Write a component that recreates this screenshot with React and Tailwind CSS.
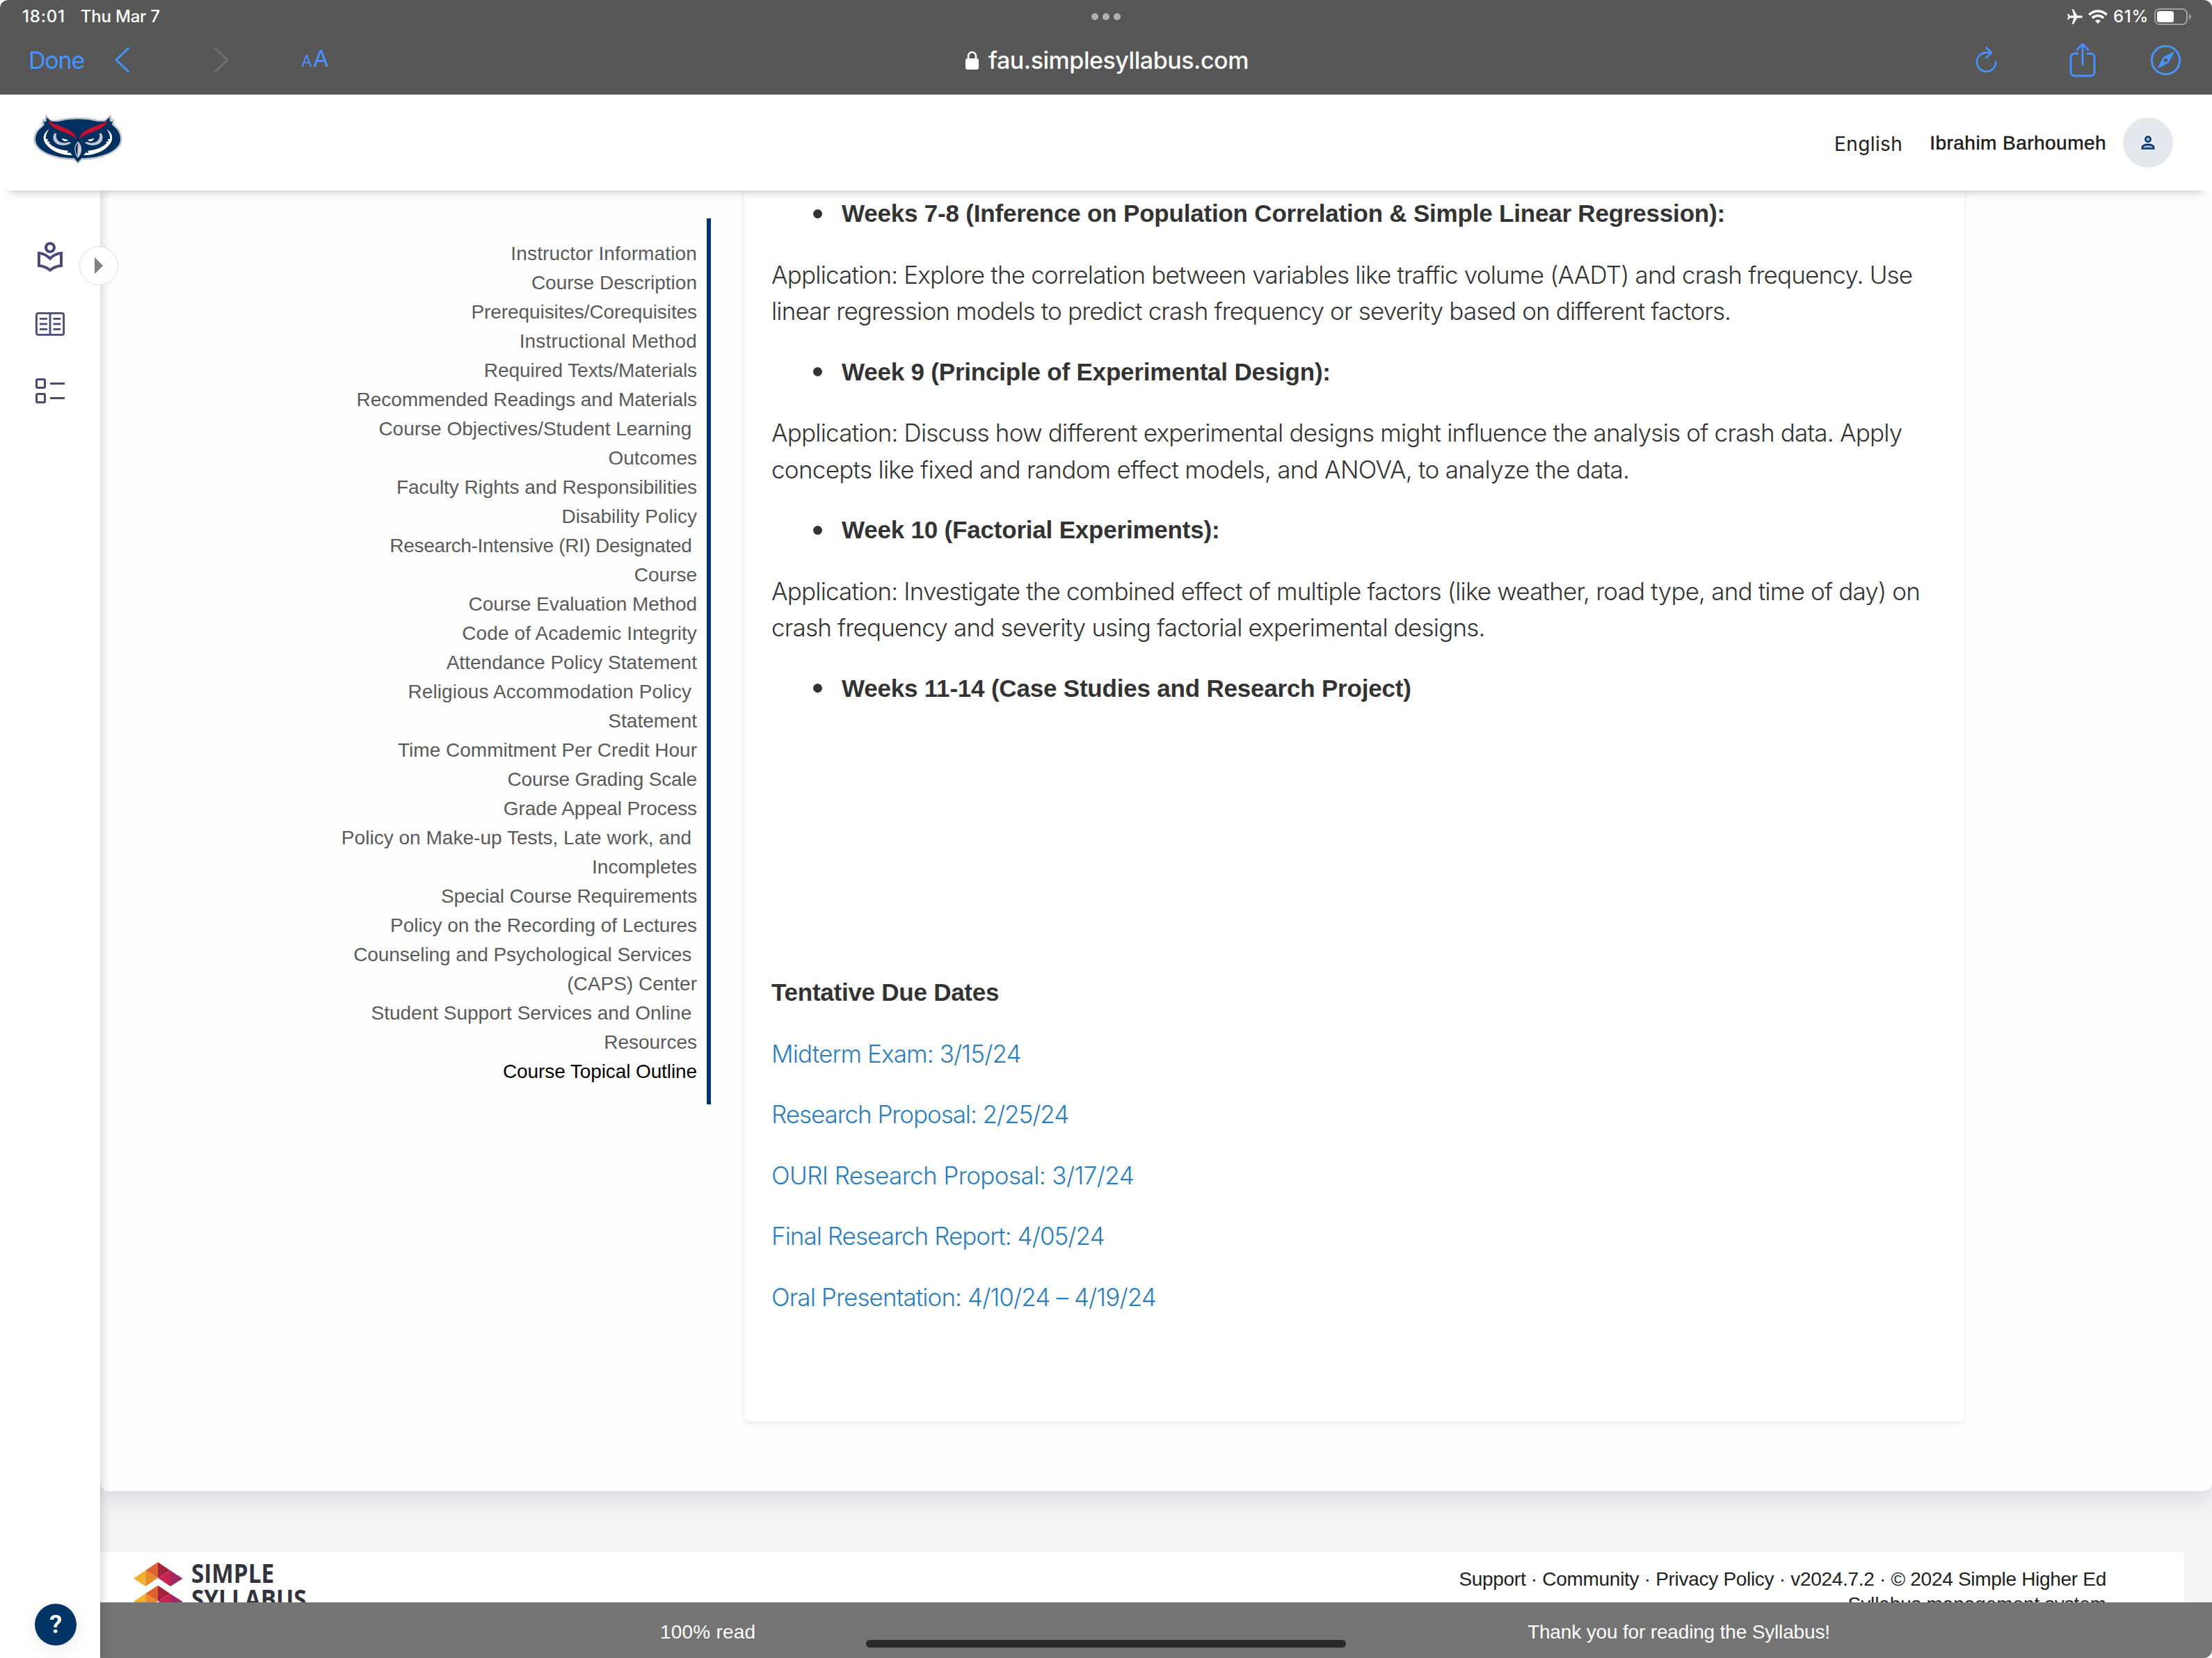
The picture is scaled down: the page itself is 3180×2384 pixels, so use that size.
import React from "react";
import { MdOutlineLocalLibrary, MdAirplanemodeActive } from "react-icons/md";

const OUTLINE = [
  ["Instructor Information", "tracking-[0.14px]"],
  ["Course Description", "tracking-normal"],
  ["Prerequisites/Corequisites", "tracking-[-0.09px]"],
  ["Instructional Method", "tracking-[0.16px]"],
  ["Required Texts/Materials", "tracking-[-0.06px]"],
  ["Recommended Readings and Materials", "tracking-[-0.07px]"],
  ["Course Objectives/Student Learning", "tracking-normal", "Outcomes"],
  ["Faculty Rights and Responsibilities", "tracking-[-0.06px]"],
  ["Disability Policy", "tracking-normal"],
  ["Research-Intensive (RI) Designated", "tracking-[-0.32px]", "Course"],
  ["Course Evaluation Method", "tracking-[-0.06px]"],
  ["Code of Academic Integrity", "tracking-[0.12px]"],
  ["Attendance Policy Statement", "tracking-[0.03px]"],
  ["Religious Accommodation Policy", "tracking-[0.1px]", "Statement"],
  ["Time Commitment Per Credit Hour", "tracking-normal"],
  ["Course Grading Scale", "tracking-[-0.15px]"],
  ["Grade Appeal Process", "tracking-[-0.1px]"],
  ["Policy on Make-up Tests, Late work, and", "tracking-[0.03px]", "Incompletes"],
  ["Special Course Requirements", "tracking-[-0.15px]"],
  ["Policy on the Recording of Lectures", "tracking-[-0.03px]"],
  ["Counseling and Psychological Services", "tracking-[-0.07px]", "(CAPS) Center"],
  ["Student Support Services and Online", "tracking-normal", "Resources"],
];

const WEEKS = [
  {
    title: "Weeks 7-8 (Inference on Population Correlation & Simple Linear Regression):",
    lines: [
      ["Application: Explore the correlation between variables like traffic volume (AADT) and crash frequency. Use", "tracking-[-0.81px]"],
      ["linear regression models to predict crash frequency or severity based on different factors.", "tracking-[-0.85px]"],
    ],
  },
  {
    title: "Week 9 (Principle of Experimental Design):",
    lines: [
      ["Application: Discuss how different experimental designs might influence the analysis of crash data. Apply", "tracking-[-0.79px]"],
      ["concepts like fixed and random effect models, and ANOVA, to analyze the data.", "tracking-[-0.71px]"],
    ],
  },
  {
    title: "Week 10 (Factorial Experiments):",
    lines: [
      ["Application: Investigate the combined effect of multiple factors (like weather, road type, and time of day) on", "tracking-[-0.81px]"],
      ["crash frequency and severity using factorial experimental designs.", "tracking-[-0.81px]"],
    ],
  },
  { title: "Weeks 11-14 (Case Studies and Research Project)", lines: [] },
];

const DUE_DATES = [
  ["Midterm Exam: 3/15/24", "tracking-[-0.88px]"],
  ["Research Proposal: 2/25/24", "tracking-[-1.06px]"],
  ["OURI Research Proposal: 3/17/24", "tracking-[-0.58px]"],
  ["Final Research Report: 4/05/24", "tracking-[-0.96px]"],
  ["Oral Presentation: 4/10/24 – 4/19/24", "tracking-[-0.9px]"],
];

function Wifi() {
  return (
    <svg width="28" height="20" viewBox="0 0 28 20" fill="none" stroke="#fff" strokeWidth="3.6">
      <path d="M1.3 7.2a18 18 0 0 1 25.4 0" />
      <path d="M5.9 11.9a11.4 11.4 0 0 1 16.2 0" />
      <path d="M14 20l-4-4.1a5.6 5.6 0 0 1 8 0z" fill="#fff" stroke="none" />
    </svg>
  );
}

function Battery() {
  return (
    <svg width="54" height="24" viewBox="0 0 54 24" fill="none">
      <rect x="1" y="1" width="46" height="22" rx="6.5" stroke="#a0a0a0" strokeWidth="2" />
      <rect x="4" y="4" width="24" height="16" rx="3.5" fill="#fff" />
      <path d="M50 8c2 .8 3 2.300 3 4s-1 3.200-3 4z" fill="#a0a0a0" />
    </svg>
  );
}

function StatusBar() {
  return (
    <div className="grid h-12 grid-cols-[1fr_auto_1fr] items-center text-[24px] font-medium text-white">
      <div className="flex gap-[22px] pl-8">
        <span className="tracking-[0.8px]">18:01</span>
        <span className="tracking-[-0.2px]">Thu Mar 7</span>
      </div>
      <div className="flex gap-1.5">
        <i className="size-2.5 rounded-full bg-[#b0b0b0]" />
        <i className="size-2.5 rounded-full bg-[#b0b0b0]" />
        <i className="size-2.5 rounded-full bg-[#b0b0b0]" />
      </div>
      <div className="flex items-center justify-end pr-[29px]">
        <MdAirplanemodeActive className="size-[26px] rotate-90" />
        <span className="ml-1.5"><Wifi /></span>
        <span className="ml-2 tracking-[0.7px]">61%</span>
        <span className="ml-2"><Battery /></span>
      </div>
    </div>
  );
}

function Toolbar() {
  return (
    <div className="grid h-[76px] grid-cols-[1fr_auto_1fr] items-center text-[34px] text-[#4793ff]">
      <div className="flex items-center">
        <span className="ml-[41px] w-[123px] shrink-0 tracking-[-1.2px]">Done</span>
        <svg width="24" height="40" viewBox="0 0 24 40" fill="none" stroke="#4793ff" strokeWidth="3" strokeLinecap="round" strokeLinejoin="round">
          <path d="M20.500 3.500L3 20l17.500 17" />
        </svg>
        <svg className="ml-[118px]" width="24" height="40" viewBox="0 0 24 40" fill="none" stroke="#707070" strokeWidth="3" strokeLinecap="round" strokeLinejoin="round">
          <path d="M3.500 3.500L21 20 3.500 37" />
        </svg>
        <span className="ml-[103px] flex items-baseline leading-10">
          <span className="text-[23px]">A</span>
          <span className="ml-px text-[33px] tracking-tight">A</span>
        </span>
      </div>
      <div className="flex items-center gap-3.5 pl-[3px] font-medium text-white">
        <svg width="19" height="27" viewBox="0 0 19 27">
          <path d="M4 13V7.500a5.500 5.500 0 0 1 11 0V13" fill="none" stroke="#fff" strokeWidth="2.600" />
          <rect y="11" width="19" height="16" rx="3" fill="#fff" />
        </svg>
        <span className="tracking-[-0.46px]">fau.simplesyllabus.com</span>
      </div>
      <div className="flex items-center justify-end pr-[44px]">
        <svg width="34" height="40" viewBox="0 0 34 40" fill="none" stroke="#4793ff" strokeWidth="2.600" strokeLinecap="round" strokeLinejoin="round">
          <path d="M30.200 22.800A13.600 13.600 0 1 1 16.600 9.600H23" />
          <path d="M16.500 2.500l7.400 7.300-7.400 7.400" />
        </svg>
        <svg className="ml-[100px]" width="42" height="52" viewBox="0 0 42 52" fill="none" stroke="#4793ff" strokeWidth="2.800" strokeLinecap="round" strokeLinejoin="round">
          <path d="M15 17H9a5 5 0 0 0-5 5v22a5 5 0 0 0 5 5h24a5 5 0 0 0 5-5V22a5 5 0 0 0-5-5h-6" strokeLinecap="butt" />
          <path d="M21 33V4M13 11.500L21 3.400l8 8.100" />
        </svg>
        <svg className="ml-[76px]" width="45" height="45" viewBox="0 0 45 45">
          <circle cx="22.500" cy="22.500" r="20.200" fill="none" stroke="#4793ff" strokeWidth="3" />
          <path
            fill="#4793ff"
            fillRule="evenodd"
            d="M34.300 11.400c.2-.6-.3-1-.9-.8L18.600 18.200 11.400 32.700c-.3.800.4 1.300 1 .9l14.200-7zM22.500 19.700a2.800 2.800 0 1 1 0 5.600 2.800 2.800 0 0 1 0-5.600z"
          />
        </svg>
      </div>
    </div>
  );
}

function OwlLogo() {
  const half = (
    <>
      <path d="M122 108C98 120 90 148 108 172C130 202 174 220 222 220L212 208L200 210L204 200C170 198 138 186 120 166L128 164L114 158L118 150L108 150C106 134 112 122 122 108Z" fill="#fff" />
      <path d="M146 124C134 140 138 162 158 172C178 181 204 178 217 166L208 162C194 169 174 167 162 158C152 149 150 136 154 127Z" fill="#c4c9cf" />
      <path d="M176 146L204 154C198 162 182 162 176 146Z" fill="#fff" />
      <path d="M117 68C146 96 232 98 241 152C214 116 134 120 117 68Z" fill="#c8102e" />
    </>
  );
  return (
    <svg width="160" height="100" viewBox="0 0 480 300">
      <path
        d="M107 42L128 66L150 68Q246 44 342 68L366 66L387 42L392 62L405 68L400 80L408 92Q437 115 437 150C437 205 350 240 264 240L246 258L228 240C140 240 54 205 54 150Q56 112 92 92L88 80L94 66L104 64Z"
        fill="#c1c6cc"
      />
      <path
        d="M110 56L132 74L160 74Q246 54 332 74L362 74L382 56L384 74L396 76L392 88L402 96Q429 118 429 150C429 200 350 232 262 232L246 250L230 232C140 232 63 200 63 150Q63 118 92 98L102 88L98 76L110 74Z"
        fill="#00305f"
      />
      {half}
      <g transform="translate(492 0) scale(-1 1)">{half}</g>
      <path d="M246 160C266 180 268 206 246 232C226 206 228 180 246 160Z" fill="#c1c6cc" />
      <path d="M246 166C232 184 233 204 244 222Z" fill="#00305f" />
      <path d="M252 184Q256 202 248 224Z" fill="#fff" />
    </svg>
  );
}

function SiteHeader() {
  return (
    <header className="relative z-30 flex h-[138px] shrink-0 items-start justify-between bg-white shadow-[0_14px_14px_-14px_rgba(0,0,0,0.3)]">
      <div className="pt-[14px] pl-[30px]">
        <OwlLogo />
      </div>
      <div className="flex items-center pt-[33px] pr-14 text-[28px] text-[#212121]">
        <span className="mt-1 mr-[39px] font-[Inter] tracking-[0.4px]">English</span>
        <span className="mt-px mr-[24px] font-['Liberation_Sans'] tracking-[0.46px] text-[#1c1c1c] [-webkit-text-stroke:0.5px_#1c1c1c]">
          Ibrahim Barhoumeh
        </span>
        <span className="flex size-[72px] items-center justify-center rounded-full bg-[#e5e9ed]">
          <svg width="20" height="20" viewBox="0 0 20 20" fill="#9fb1c3" stroke="#003366" strokeWidth="2.400">
            <circle cx="10" cy="5.200" r="3.700" />
            <path d="M1.700 18.600v-1.800c0-2.600 4.600-4 8.300-4s8.300 1.400 8.300 4v1.800z" />
          </svg>
        </span>
      </div>
    </header>
  );
}

function BookIcon() {
  return (
    <svg width="42" height="34" viewBox="0 0 42 34" fill="none" stroke="#494a77" strokeWidth="2.800">
      <rect x="1.400" y="1.400" width="39.200" height="31" rx="2.500" />
      <path d="M21 1v32M6 9.300h11M6 16.800h11M6 24.300h11M25.500 9.300h10.700M25.500 16.800h10.700M25.500 24.300h10.700" />
    </svg>
  );
}

function ChecklistIcon() {
  return (
    <svg width="42" height="36" viewBox="0 0 42 36" fill="none" stroke="#494a77" strokeWidth="3">
      <rect x="1.500" y="1.500" width="12" height="12" rx="1.500" />
      <rect x="1.500" y="22.500" width="12" height="12" rx="1.500" />
      <path d="M21 7.500h21M21 28.500h21" />
    </svg>
  );
}

function SideRail() {
  return (
    <aside className="relative z-20 flex w-[144px] shrink-0 flex-col items-start bg-white shadow-[1px_0_14px_rgba(0,0,0,0.22)]">
      <MdOutlineLocalLibrary className="mt-[72px] ml-12 size-12 text-[#494a77]" />
      <span className="mt-[55px] ml-[51px]"><BookIcon /></span>
      <span className="mt-[61px] ml-[51px]"><ChecklistIcon /></span>
      <button className="absolute top-20 left-[114px] flex size-14 items-center justify-center rounded-full border border-[#dcdcdc] bg-white">
        <svg width="12" height="24" viewBox="0 0 12 24" className="-mt-px">
          <path d="M0 0l12 12L0 24z" fill="#808080" />
        </svg>
      </button>
      <button className="mt-auto mb-[18px] ml-[50px] flex size-[60px] items-center justify-center rounded-full bg-[#003366] font-[Roboto] text-[37px] font-semibold text-white shadow-[0_6px_24px_rgba(60,50,90,0.09)]">
        ?
      </button>
    </aside>
  );
}

function OutlineNav() {
  return (
    <nav className="mt-10 ml-[296px] h-[1274px] w-[582px] shrink-0 border-r-[6px] border-[#003366] pt-[30px] pr-[14px] text-right text-[28px] leading-[42px] whitespace-pre text-[#5a5a5a]">
      {OUTLINE.map(([label, tracking, rest]) => (
        <div key={label}>
          <div className={tracking}>{rest ? label + " " : label}</div>
          {rest && <div>{rest}</div>}
        </div>
      ))}
      <div className="tracking-[-0.1px] text-black">Course Topical Outline</div>
    </nav>
  );
}

function SyllabusCard() {
  return (
    <article className="ml-12 h-[1770px] w-[1754px] shrink-0 rounded-b-lg bg-white px-[39px] pt-[7px] text-[35px] leading-[52.5px] whitespace-nowrap text-[#333] shadow-[0_3px_6px_rgba(50,50,93,0.1)]">
      {WEEKS.map((week) => (
        <section key={week.title}>
          <h3 className="mb-[35px] flex items-center pl-[60px] font-bold tracking-[-0.2px]">
            <i className="mr-7 size-[13px] rounded-full bg-[#333]" />
            {week.title}
          </h3>
          {week.lines.length > 0 && (
            <div className="mb-[35px] font-[Inter] font-light">
              {week.lines.map(([text, tracking]) => (
                <p key={text} className={tracking}>{text}</p>
              ))}
            </div>
          )}
        </section>
      ))}
      <h3 className="mt-[385px] mb-[35px] font-bold tracking-[-0.25px]">Tentative Due Dates</h3>
      {DUE_DATES.map(([text, tracking]) => (
        <div key={text} className="mb-[35px] font-[Inter] font-light text-[#2a7ebd]">
          <p className={tracking}>{text}</p>
        </div>
      ))}
    </article>
  );
}

function Chevron({ y }) {
  return (
    <g transform={`translate(0 ${y})`}>
      <path d="M0 70L52 35V104Z" fill="#f2b02c" />
      <path d="M52 35L105 67L52 104Z" fill="#e88a2d" />
      <path d="M105 0V67L52 35Z" fill="#e0622f" />
      <path d="M105 0V67L159 36Z" fill="#a3233f" />
      <path d="M159 36L105 67L159 104Z" fill="#c82253" />
      <path d="M159 36L212 70L159 104Z" fill="#a02865" />
    </g>
  );
}

function Footer() {
  return (
    <footer className="flex h-[72px] w-[2996px] justify-between overflow-hidden bg-white">
      <div className="flex items-start pl-[48px]">
        <svg width="71" height="90" viewBox="0 0 213 270" className="mt-[14px] shrink-0">
          <Chevron y={1} />
          <Chevron y={101} />
        </svg>
        <div className="mt-[11px] ml-3 origin-left scale-x-[0.9] font-['Open_Sans'] text-[37px] leading-[37px] font-bold text-[#33333d]">
          <div>SIMPLE</div>
          <div>SYLLABUS</div>
        </div>
      </div>
      <div className="pt-[21px] pr-28 text-right text-[28px] leading-9 text-[#212121]">
        <div className="tracking-[-0.3px]">Support · Community · Privacy Policy · v2024.7.2 · © 2024 Simple Higher Ed</div>
        <div className="tracking-[-0.08px]">Syllabus management system</div>
      </div>
    </footer>
  );
}

export default function App() {
  return (
    <div className="h-[2384px] w-[3180px] overflow-hidden bg-white">
      <div className="relative flex h-full flex-col overflow-hidden rounded-t-[12px] rounded-br-[12px] bg-[#f4f4f4] font-['Liberation_Sans',sans-serif]">
        <div className="h-[136px] shrink-0 bg-[#575757] font-[Inter]">
          <StatusBar />
          <Toolbar />
        </div>
        <SiteHeader />
        <div className="flex h-[2110px]">
          <SideRail />
          <div className="flex w-[3036px] flex-col">
            <main className="flex h-[1870px] shrink-0 items-start rounded-b-xl bg-[#fefefe] shadow-[0_10px_32px_rgba(60,50,90,0.15)]">
              <OutlineNav />
              <SyllabusCard />
            </main>
            <div className="mt-[88px]">
              <Footer />
            </div>
            <div className="flex h-20 shrink-0 items-center bg-[#747474] pt-[5px] pl-[805px] text-[28px] text-white">
              <span className="w-[1247px] tracking-[0.2px]">100% read</span>
              <span className="tracking-[-0.16px]">Thank you for reading the Syllabus!</span>
            </div>
          </div>
        </div>
        <div className="absolute bottom-[15px] left-[1245px] z-40 h-[11px] w-[690px] rounded-full bg-[#2a2a2a]" />
      </div>
    </div>
  );
}
